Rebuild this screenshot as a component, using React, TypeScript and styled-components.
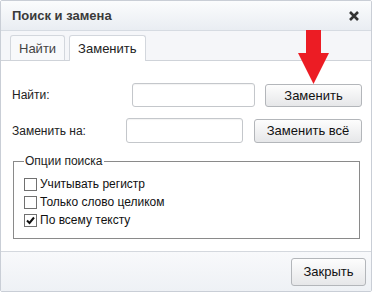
import React from "react";
import styled, { createGlobalStyle } from "styled-components";

const Global = createGlobalStyle`
  html, body { margin: 0; padding: 0; background: #fff; }
  body { font-family: "Liberation Sans", Arial, sans-serif; font-size: 13px; color: #222; }
`;

const Dialog = styled.div`
  position: relative;
  width: 372px;
  height: 292px;
  box-sizing: border-box;
  border: 1px solid #c9ced6;
  border-radius: 2px;
  display: flex;
  flex-direction: column;
  background: #fff;
  overflow: hidden;
`;

const Header = styled.div`
  height: 29px;
  flex: none;
  display: flex;
  align-items: center;
  justify-content: space-between;
  padding: 0 12px 0 11px;
  background: linear-gradient(#fbfcfd, #e9edf2);
  border-bottom: 1px solid #d6dbe2;
`;

const Title = styled.div`
  font-weight: bold;
  font-size: 13px;
  color: #3a3a3a;
`;

const TabBar = styled.div`
  height: 29px;
  flex: none;
  display: flex;
  align-items: flex-end;
  gap: 4px;
  padding-left: 9px;
  background: #f5f6f9;
  border-bottom: 1px solid #cfd3d9;
`;

const Tab = styled.div<{ $active?: boolean }>`
  box-sizing: border-box;
  padding: 0 8px;
  display: flex;
  align-items: center;
  border: 1px solid #d3d7dd;
  border-bottom: none;
  border-radius: 3px 3px 0 0;
  margin-bottom: ${(p) => (p.$active ? "-1px" : "0")};
  height: ${(p) => (p.$active ? "26px" : "25px")};
  background: ${(p) => (p.$active ? "#fff" : "#f8f9fb")};
  color: ${(p) => (p.$active ? "#222" : "#444")};
  font-size: 13px;
`;

const Body = styled.div`
  flex: 1;
  padding: 22px 9px 0 11px;
`;

const Row = styled.div<{ $gap: number }>`
  display: flex;
  align-items: center;
  margin-bottom: 11px;
  gap: ${(p) => p.$gap}px;
`;

const Label = styled.div`
  flex: 1;
  font-size: 12px;
  color: #222;
`;

const Field = styled.div<{ $w: number; $h: number }>`
  width: ${(p) => p.$w}px;
  height: ${(p) => p.$h}px;
  box-sizing: border-box;
  border: 1px solid #c4c7cb;
  border-radius: 3px;
  background: #fff;
  box-shadow: inset 0 1px 1px rgba(0, 0, 0, 0.05);
`;

const Button = styled.button<{ $w: number; $h: number }>`
  width: ${(p) => p.$w}px;
  height: ${(p) => p.$h}px;
  box-sizing: border-box;
  border: 1px solid #b3b6ba;
  border-radius: 3px;
  background: linear-gradient(#fdfdfd, #e6e7e9);
  font-family: "Liberation Sans", Arial, sans-serif;
  font-size: 13px;
  color: #111;
  padding: 0;
`;

const Fieldset = styled.fieldset`
  margin: 9px 2px 0 1px;
  padding: 7px 10px 9px 10px;
  border: 1px solid #8a8a8a;
`;

const Legend = styled.legend`
  padding: 0 1px;
  margin-left: 0;
  font-size: 12px;
  color: #222;
`;

const Option = styled.label`
  display: flex;
  align-items: center;
  height: 18px;
  gap: 3px;
  font-size: 12px;
  color: #111;
`;

const Box = styled.span`
  width: 13px;
  height: 13px;
  box-sizing: border-box;
  border: 1px solid #707070;
  background: #fff;
  display: flex;
  align-items: center;
  justify-content: center;
`;

const Footer = styled.div`
  height: 39px;
  flex: none;
  display: flex;
  align-items: center;
  justify-content: flex-end;
  padding-right: 5px;
  border-top: 1px solid #d4d8de;
  background: linear-gradient(#f8f9fb, #eef1f5);
`;

const Arrow = styled.svg`
  position: absolute;
  left: 297px;
  top: 29px;
`;

const Check = ({ on }: { on?: boolean }) => (
  <Box>
    {on && (
      <svg width="9" height="9" viewBox="0 0 9 9">
        <path d="M1 4.5 L3.5 7 L8 1.5" fill="none" stroke="#111" strokeWidth="2" />
      </svg>
    )}
  </Box>
);

export default function App() {
  return (
    <>
      <Global />
      <Dialog>
        <Header>
          <Title>Поиск и замена</Title>
          <svg width="10" height="10" viewBox="0 0 10 10">
            <path d="M1 1 L9 9 M9 1 L1 9" stroke="#333" strokeWidth="2.6" />
          </svg>
        </Header>
        <TabBar>
          <Tab>Найти</Tab>
          <Tab $active>Заменить</Tab>
        </TabBar>
        <Body>
          <Row $gap={10}>
            <Label>Найти:</Label>
            <Field $w={123} $h={24} />
            <Button $w={97} $h={23}>Заменить</Button>
          </Row>
          <Row $gap={11}>
            <Label>Заменить на:</Label>
            <Field $w={117} $h={25} />
            <Button $w={108} $h={24}>Заменить всё</Button>
          </Row>
          <Fieldset>
            <Legend>Опции поиска</Legend>
            <Option><Check />Учитывать регистр</Option>
            <Option><Check />Только слово целиком</Option>
            <Option><Check on />По всему тексту</Option>
          </Fieldset>
        </Body>
        <Footer>
          <Button $w={75} $h={28}>Закрыть</Button>
        </Footer>
        <Arrow width="31" height="54" viewBox="0 0 31 54">
          <path d="M8 0 H23 V23 H31 L15.5 54 L0 23 H8 Z" fill="#ec1c24" />
        </Arrow>
      </Dialog>
    </>
  );
}
